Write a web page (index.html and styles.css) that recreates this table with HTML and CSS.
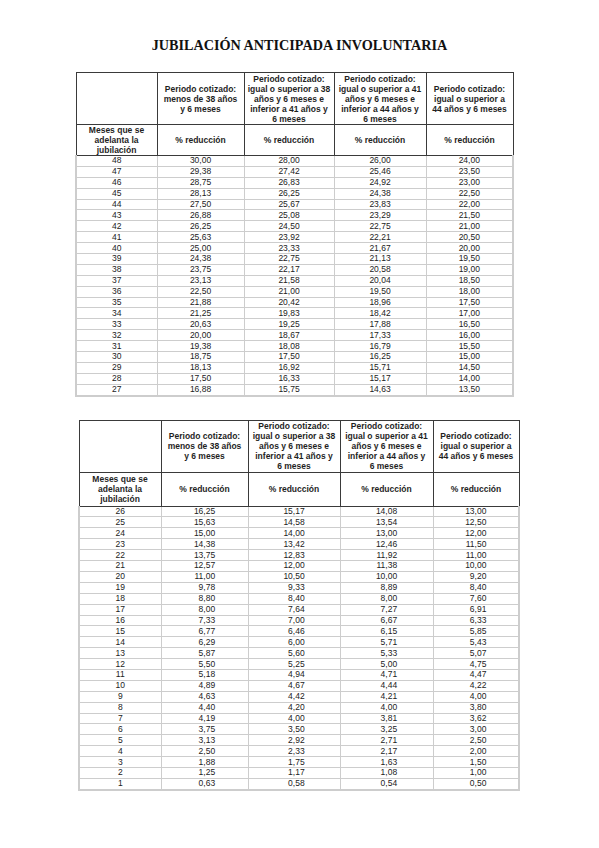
FILE: index.html
```html
<!DOCTYPE html>
<html lang="es">
<head>
<meta charset="utf-8">
<title>Jubilación anticipada involuntaria</title>
<link rel="stylesheet" href="styles.css">
</head>
<body>
<div class="page">
<h1 class="title">JUBILACIÓN ANTICIPADA INVOLUNTARIA</h1>

<table class="tbl tbl-1">
<colgroup><col class="c0"><col class="c1"><col class="c2"><col class="c3"><col class="c4"></colgroup>
<thead>
<tr class="h1">
<th></th>
<th>Periodo cotizado:<br>menos de 38 años<br>y 6 meses</th>
<th>Periodo cotizado:<br>igual o superior a 38<br>años y 6 meses e<br>inferior a 41 años y<br>6 meses</th>
<th>Periodo cotizado:<br>igual o superior a 41<br>años y 6 meses e<br>inferior a 44 años y<br>6 meses</th>
<th>Periodo cotizado:<br>igual o superior a<br>44 años y 6 meses</th>
</tr>
<tr class="h2">
<th>Meses que se<br>adelanta la<br>jubilación</th>
<th>% reducción</th><th>% reducción</th><th>% reducción</th><th>% reducción</th>
</tr>
</thead>
<tbody>
<tr><td>48</td><td><span class="v">30,00</span></td><td><span class="v">28,00</span></td><td><span class="v">26,00</span></td><td><span class="v">24,00</span></td></tr>
<tr><td>47</td><td><span class="v">29,38</span></td><td><span class="v">27,42</span></td><td><span class="v">25,46</span></td><td><span class="v">23,50</span></td></tr>
<tr><td>46</td><td><span class="v">28,75</span></td><td><span class="v">26,83</span></td><td><span class="v">24,92</span></td><td><span class="v">23,00</span></td></tr>
<tr><td>45</td><td><span class="v">28,13</span></td><td><span class="v">26,25</span></td><td><span class="v">24,38</span></td><td><span class="v">22,50</span></td></tr>
<tr><td>44</td><td><span class="v">27,50</span></td><td><span class="v">25,67</span></td><td><span class="v">23,83</span></td><td><span class="v">22,00</span></td></tr>
<tr><td>43</td><td><span class="v">26,88</span></td><td><span class="v">25,08</span></td><td><span class="v">23,29</span></td><td><span class="v">21,50</span></td></tr>
<tr><td>42</td><td><span class="v">26,25</span></td><td><span class="v">24,50</span></td><td><span class="v">22,75</span></td><td><span class="v">21,00</span></td></tr>
<tr><td>41</td><td><span class="v">25,63</span></td><td><span class="v">23,92</span></td><td><span class="v">22,21</span></td><td><span class="v">20,50</span></td></tr>
<tr><td>40</td><td><span class="v">25,00</span></td><td><span class="v">23,33</span></td><td><span class="v">21,67</span></td><td><span class="v">20,00</span></td></tr>
<tr><td>39</td><td><span class="v">24,38</span></td><td><span class="v">22,75</span></td><td><span class="v">21,13</span></td><td><span class="v">19,50</span></td></tr>
<tr><td>38</td><td><span class="v">23,75</span></td><td><span class="v">22,17</span></td><td><span class="v">20,58</span></td><td><span class="v">19,00</span></td></tr>
<tr><td>37</td><td><span class="v">23,13</span></td><td><span class="v">21,58</span></td><td><span class="v">20,04</span></td><td><span class="v">18,50</span></td></tr>
<tr><td>36</td><td><span class="v">22,50</span></td><td><span class="v">21,00</span></td><td><span class="v">19,50</span></td><td><span class="v">18,00</span></td></tr>
<tr><td>35</td><td><span class="v">21,88</span></td><td><span class="v">20,42</span></td><td><span class="v">18,96</span></td><td><span class="v">17,50</span></td></tr>
<tr><td>34</td><td><span class="v">21,25</span></td><td><span class="v">19,83</span></td><td><span class="v">18,42</span></td><td><span class="v">17,00</span></td></tr>
<tr><td>33</td><td><span class="v">20,63</span></td><td><span class="v">19,25</span></td><td><span class="v">17,88</span></td><td><span class="v">16,50</span></td></tr>
<tr><td>32</td><td><span class="v">20,00</span></td><td><span class="v">18,67</span></td><td><span class="v">17,33</span></td><td><span class="v">16,00</span></td></tr>
<tr><td>31</td><td><span class="v">19,38</span></td><td><span class="v">18,08</span></td><td><span class="v">16,79</span></td><td><span class="v">15,50</span></td></tr>
<tr><td>30</td><td><span class="v">18,75</span></td><td><span class="v">17,50</span></td><td><span class="v">16,25</span></td><td><span class="v">15,00</span></td></tr>
<tr><td>29</td><td><span class="v">18,13</span></td><td><span class="v">16,92</span></td><td><span class="v">15,71</span></td><td><span class="v">14,50</span></td></tr>
<tr><td>28</td><td><span class="v">17,50</span></td><td><span class="v">16,33</span></td><td><span class="v">15,17</span></td><td><span class="v">14,00</span></td></tr>
<tr><td>27</td><td><span class="v">16,88</span></td><td><span class="v">15,75</span></td><td><span class="v">14,63</span></td><td><span class="v">13,50</span></td></tr>
</tbody>
</table>

<table class="tbl tbl-2">
<colgroup><col class="c0"><col class="c1"><col class="c2"><col class="c3"><col class="c4"></colgroup>
<thead>
<tr class="h1">
<th></th>
<th>Periodo cotizado:<br>menos de 38 años<br>y 6 meses</th>
<th>Periodo cotizado:<br>igual o superior a 38<br>años y 6 meses e<br>inferior a 41 años y<br>6 meses</th>
<th>Periodo cotizado:<br>igual o superior a 41<br>años y 6 meses e<br>inferior a 44 años y<br>6 meses</th>
<th>Periodo cotizado:<br>igual o superior a<br>44 años y 6 meses</th>
</tr>
<tr class="h2">
<th>Meses que se<br>adelanta la<br>jubilación</th>
<th>% reducción</th><th>% reducción</th><th>% reducción</th><th>% reducción</th>
</tr>
</thead>
<tbody>
<tr><td>26</td><td><span class="v">16,25</span></td><td><span class="v">15,17</span></td><td><span class="v">14,08</span></td><td><span class="v">13,00</span></td></tr>
<tr><td>25</td><td><span class="v">15,63</span></td><td><span class="v">14,58</span></td><td><span class="v">13,54</span></td><td><span class="v">12,50</span></td></tr>
<tr><td>24</td><td><span class="v">15,00</span></td><td><span class="v">14,00</span></td><td><span class="v">13,00</span></td><td><span class="v">12,00</span></td></tr>
<tr><td>23</td><td><span class="v">14,38</span></td><td><span class="v">13,42</span></td><td><span class="v">12,46</span></td><td><span class="v">11,50</span></td></tr>
<tr><td>22</td><td><span class="v">13,75</span></td><td><span class="v">12,83</span></td><td><span class="v">11,92</span></td><td><span class="v">11,00</span></td></tr>
<tr><td>21</td><td><span class="v">12,57</span></td><td><span class="v">12,00</span></td><td><span class="v">11,38</span></td><td><span class="v">10,00</span></td></tr>
<tr><td>20</td><td><span class="v">11,00</span></td><td><span class="v">10,50</span></td><td><span class="v">10,00</span></td><td><span class="v">9,20</span></td></tr>
<tr><td>19</td><td><span class="v">9,78</span></td><td><span class="v">9,33</span></td><td><span class="v">8,89</span></td><td><span class="v">8,40</span></td></tr>
<tr><td>18</td><td><span class="v">8,80</span></td><td><span class="v">8,40</span></td><td><span class="v">8,00</span></td><td><span class="v">7,60</span></td></tr>
<tr><td>17</td><td><span class="v">8,00</span></td><td><span class="v">7,64</span></td><td><span class="v">7,27</span></td><td><span class="v">6,91</span></td></tr>
<tr><td>16</td><td><span class="v">7,33</span></td><td><span class="v">7,00</span></td><td><span class="v">6,67</span></td><td><span class="v">6,33</span></td></tr>
<tr><td>15</td><td><span class="v">6,77</span></td><td><span class="v">6,46</span></td><td><span class="v">6,15</span></td><td><span class="v">5,85</span></td></tr>
<tr><td>14</td><td><span class="v">6,29</span></td><td><span class="v">6,00</span></td><td><span class="v">5,71</span></td><td><span class="v">5,43</span></td></tr>
<tr><td>13</td><td><span class="v">5,87</span></td><td><span class="v">5,60</span></td><td><span class="v">5,33</span></td><td><span class="v">5,07</span></td></tr>
<tr><td>12</td><td><span class="v">5,50</span></td><td><span class="v">5,25</span></td><td><span class="v">5,00</span></td><td><span class="v">4,75</span></td></tr>
<tr><td>11</td><td><span class="v">5,18</span></td><td><span class="v">4,94</span></td><td><span class="v">4,71</span></td><td><span class="v">4,47</span></td></tr>
<tr><td>10</td><td><span class="v">4,89</span></td><td><span class="v">4,67</span></td><td><span class="v">4,44</span></td><td><span class="v">4,22</span></td></tr>
<tr><td>9</td><td><span class="v">4,63</span></td><td><span class="v">4,42</span></td><td><span class="v">4,21</span></td><td><span class="v">4,00</span></td></tr>
<tr><td>8</td><td><span class="v">4,40</span></td><td><span class="v">4,20</span></td><td><span class="v">4,00</span></td><td><span class="v">3,80</span></td></tr>
<tr><td>7</td><td><span class="v">4,19</span></td><td><span class="v">4,00</span></td><td><span class="v">3,81</span></td><td><span class="v">3,62</span></td></tr>
<tr><td>6</td><td><span class="v">3,75</span></td><td><span class="v">3,50</span></td><td><span class="v">3,25</span></td><td><span class="v">3,00</span></td></tr>
<tr><td>5</td><td><span class="v">3,13</span></td><td><span class="v">2,92</span></td><td><span class="v">2,71</span></td><td><span class="v">2,50</span></td></tr>
<tr><td>4</td><td><span class="v">2,50</span></td><td><span class="v">2,33</span></td><td><span class="v">2,17</span></td><td><span class="v">2,00</span></td></tr>
<tr><td>3</td><td><span class="v">1,88</span></td><td><span class="v">1,75</span></td><td><span class="v">1,63</span></td><td><span class="v">1,50</span></td></tr>
<tr><td>2</td><td><span class="v">1,25</span></td><td><span class="v">1,17</span></td><td><span class="v">1,08</span></td><td><span class="v">1,00</span></td></tr>
<tr><td>1</td><td><span class="v">0,63</span></td><td><span class="v">0,58</span></td><td><span class="v">0,54</span></td><td><span class="v">0,50</span></td></tr>
</tbody>
</table>
</div>
</body>
</html>
```

FILE: styles.css
```css
html, body {
  margin: 0;
  padding: 0;
  background: #ffffff;
}

.page {
  width: 599px;
  padding-top: 36px;
  color: #1c1c1c;
  font-family: "Liberation Sans", Arial, sans-serif;
}

.title {
  margin: 0 0 18px 0;
  font-family: "Liberation Serif", "Times New Roman", serif;
  font-weight: bold;
  font-size: 14.2px;
  line-height: 18px;
  text-align: center;
  color: #111111;
}

.tbl {
  border-collapse: collapse;
  table-layout: fixed;
  font-size: 8.5px;
}

.tbl-1 {
  width: 437px;
  margin-left: 75px;
  margin-bottom: 23px;
}

.tbl-2 {
  width: 440px;
  margin-left: 78px;
}

.tbl-1 .c0 { width: 81px; }
.tbl-1 .c1 { width: 87px; }
.tbl-1 .c2 { width: 90px; }
.tbl-1 .c3 { width: 92px; }
.tbl-1 .c4 { width: 87px; }

.tbl-2 .c0 { width: 82px; }
.tbl-2 .c1 { width: 87px; }
.tbl-2 .c2 { width: 92px; }
.tbl-2 .c3 { width: 93px; }
.tbl-2 .c4 { width: 86px; }

.tbl th {
  border: 1px solid #3a3a3a;
  font-weight: bold;
  line-height: 10px;
  padding: 0 1px;
  text-align: center;
  vertical-align: middle;
  white-space: nowrap;
  color: #1f1f1f;
}

.tbl .h1 { height: 52px; }
.tbl-1 .h2 { height: 31px; }
.tbl-2 .h2 { height: 34px; }

.tbl td {
  border: 1px solid #cdcdcd;
  height: 9.9px;
  padding: 0;
  font-size: 8.5px;
  line-height: 9px;
  text-align: center;
  vertical-align: middle;
  white-space: nowrap;
  color: #222222;
}

.tbl td:first-child { border-left: 2px solid #cdcdcd; }
.tbl td:last-child { border-right: 2px solid #cdcdcd; }
.tbl tbody tr:last-child td { border-bottom: 2px solid #cdcdcd; }

.v {
  display: inline-block;
  width: 2.5em;
  text-align: right;
  vertical-align: top;
  line-height: 9px;
}
```
